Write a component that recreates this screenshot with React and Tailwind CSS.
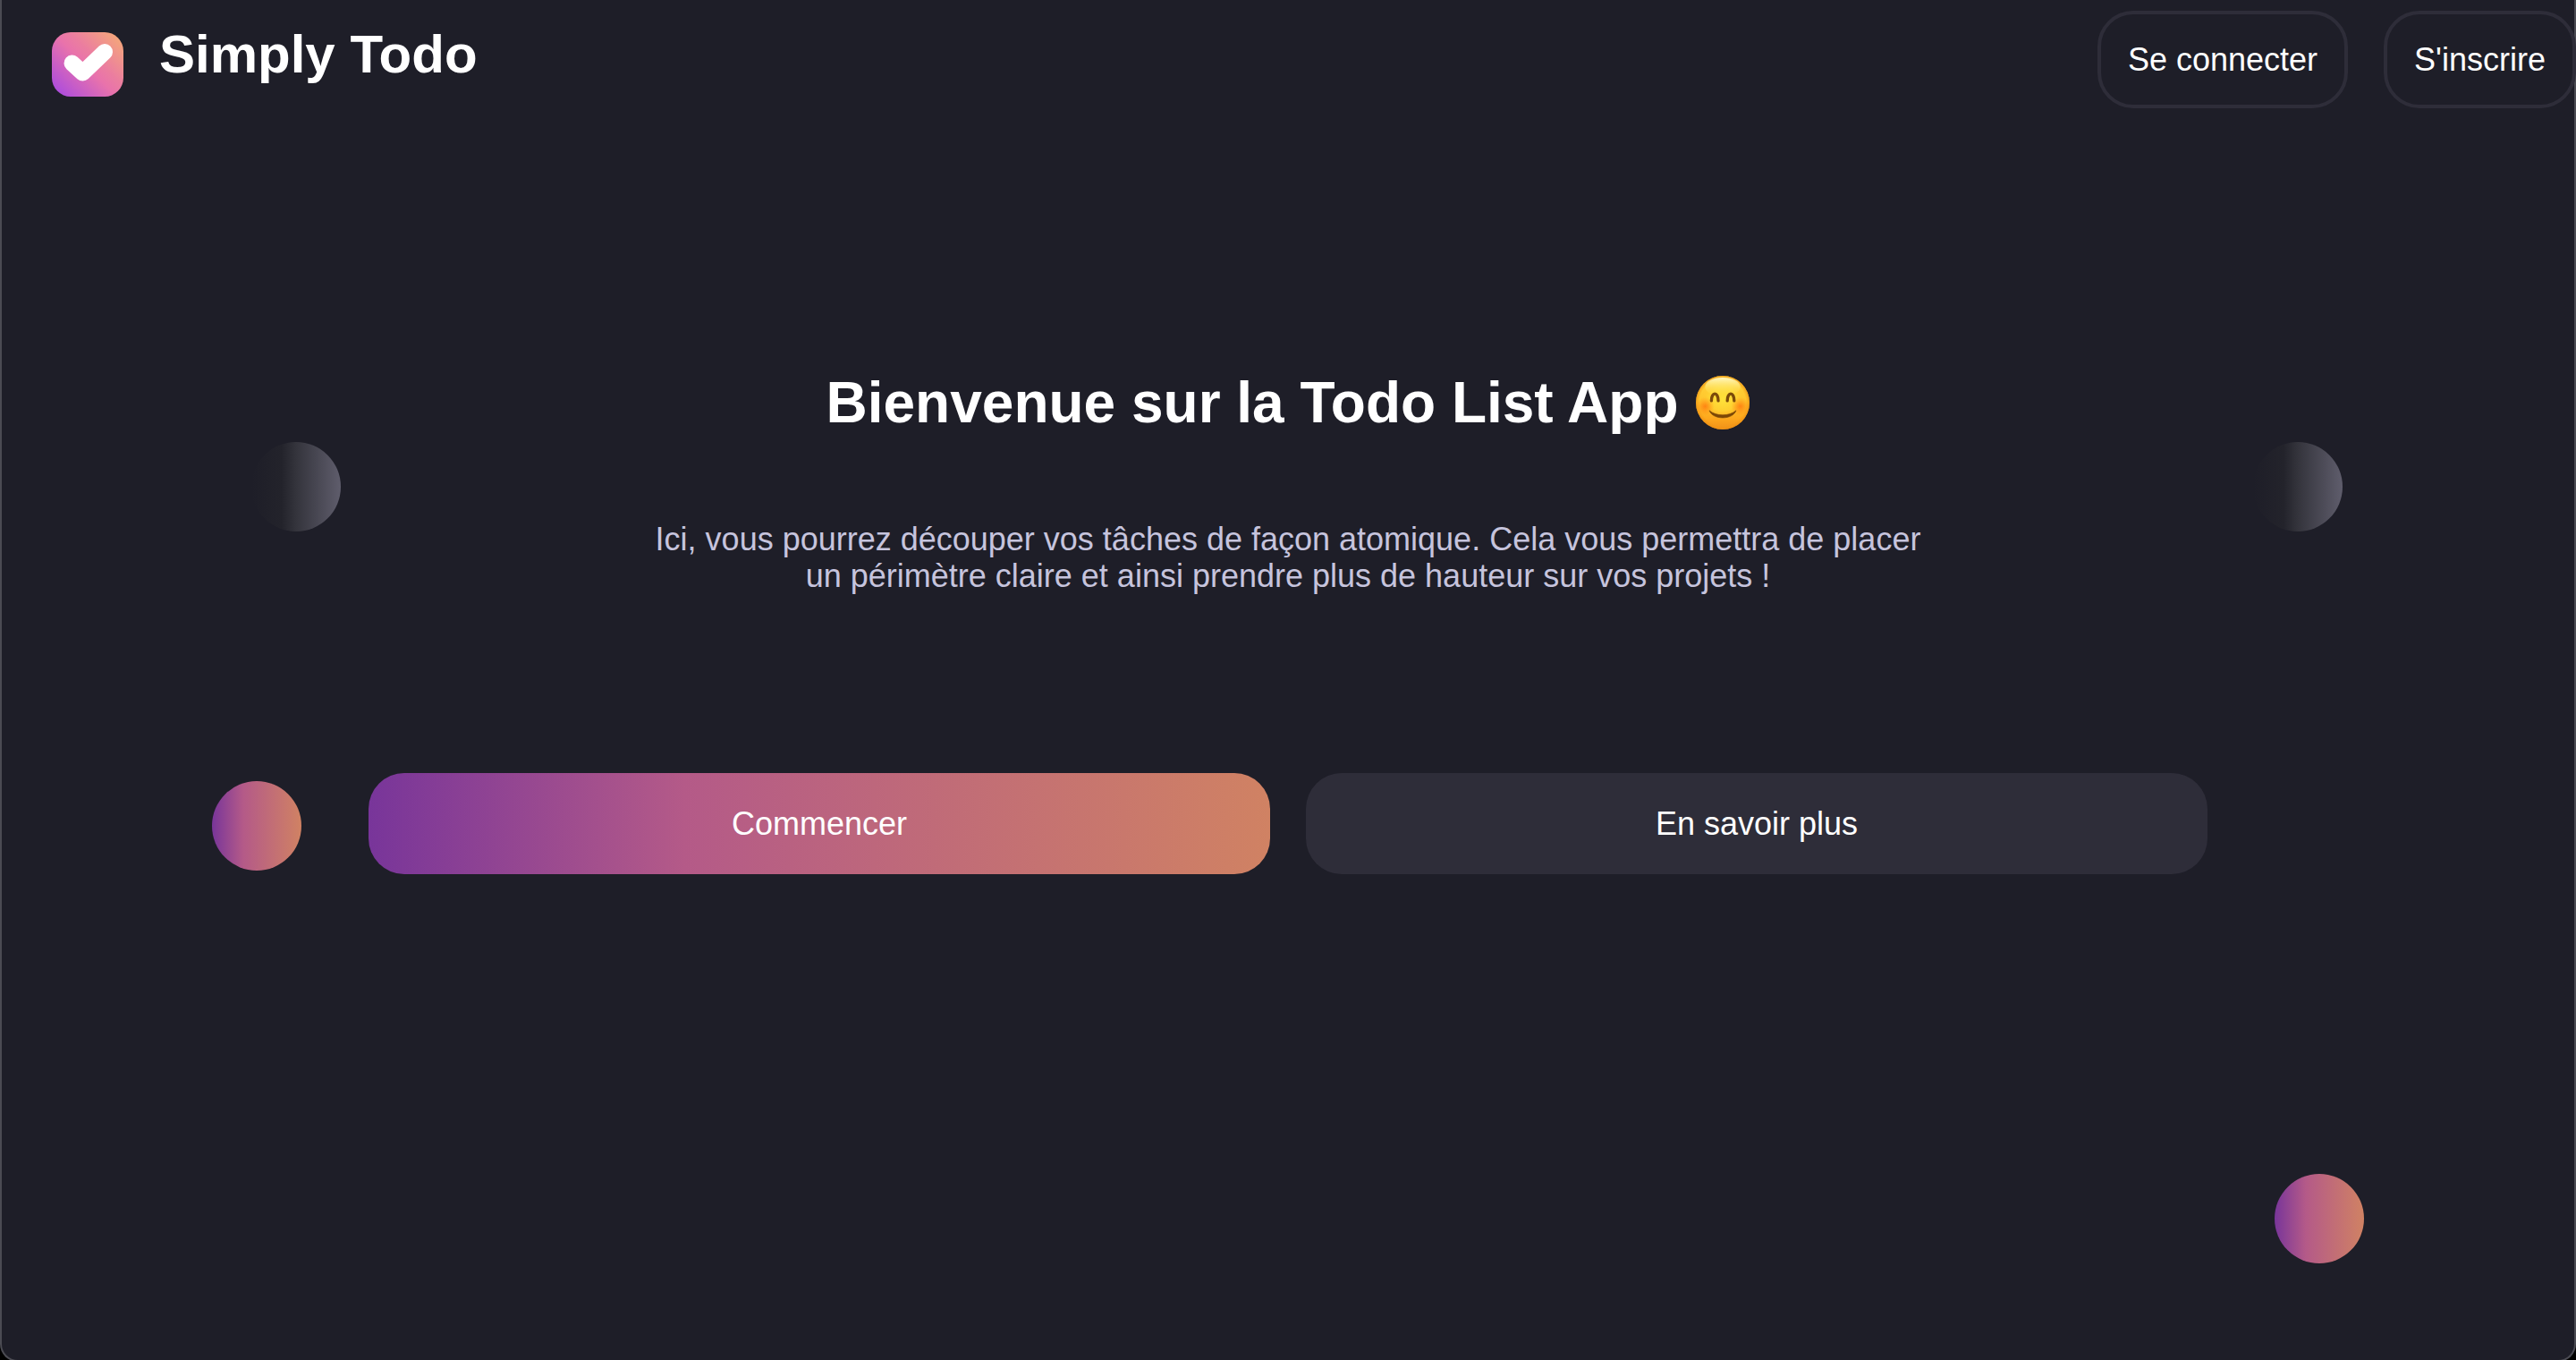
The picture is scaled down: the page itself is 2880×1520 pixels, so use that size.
const ACCENT =
  "bg-[linear-gradient(90deg,#78359a_0%,#b45a88_35%,#d08263_100%)]";
const MUTED =
  "bg-[linear-gradient(90deg,#1e1e28_0%,#23232b_34%,#34343c_50%,#5f5d6c_100%)]";

function Logo() {
  return (
    <svg className="h-[72px] w-20" viewBox="0 0 80 72" role="img" aria-label="Simply Todo">
      <defs>
        <linearGradient id="logo-fill" gradientUnits="userSpaceOnUse" x1="8" y1="68" x2="72" y2="4">
          <stop offset="0" stopColor="#ae4ddc" />
          <stop offset="0.48" stopColor="#e973ab" />
          <stop offset="0.62" stopColor="#eb7da0" />
          <stop offset="1" stopColor="#f4a57c" />
        </linearGradient>
      </defs>
      <rect width="80" height="72" rx="21" fill="url(#logo-fill)" />
      <path
        d="M22.5 34.5 L34.5 45.5 L59 22"
        fill="none"
        stroke="#fff"
        strokeWidth="18"
        strokeLinecap="round"
        strokeLinejoin="round"
      />
    </svg>
  );
}

function Smile() {
  return (
    <svg className="size-[60px]" viewBox="0 0 58 58" role="img" aria-label="Sourire">
      <defs>
        <linearGradient id="face" x1="0" y1="0" x2="0" y2="1">
          <stop offset="0" stopColor="#ffd83f" />
          <stop offset="0.5" stopColor="#ffc42b" />
          <stop offset="0.8" stopColor="#fda71d" />
          <stop offset="1" stopColor="#f0901a" />
        </linearGradient>
        <radialGradient id="glow" cx="0.5" cy="0.5" r="0.5">
          <stop offset="0" stopColor="#ffe23b" />
          <stop offset="0.6" stopColor="#ffd935" stopOpacity="0.7" />
          <stop offset="1" stopColor="#ffc22b" stopOpacity="0" />
        </radialGradient>
        <radialGradient id="cheek">
          <stop offset="0" stopColor="#ff7a0f" stopOpacity="0.85" />
          <stop offset="1" stopColor="#ff8a12" stopOpacity="0" />
        </radialGradient>
        <linearGradient id="shine" x1="0" y1="0" x2="0" y2="1">
          <stop offset="0" stopColor="#fffbd0" stopOpacity="0.9" />
          <stop offset="1" stopColor="#ffe94a" stopOpacity="0" />
        </linearGradient>
        <radialGradient id="rim">
          <stop offset="0.86" stopColor="#f29a12" stopOpacity="0" />
          <stop offset="1" stopColor="#ee8f12" stopOpacity="0.75" />
        </radialGradient>
      </defs>
      <circle cx="29" cy="29" r="29" fill="url(#face)" />
      <ellipse cx="29" cy="25" rx="24" ry="22" fill="url(#glow)" />
      <circle cx="29" cy="29" r="29" fill="url(#rim)" />
      <ellipse cx="29" cy="12" rx="19" ry="10" fill="url(#shine)" />
      <circle cx="10" cy="33" r="10" fill="url(#cheek)" />
      <circle cx="48" cy="33" r="10" fill="url(#cheek)" />
      <g fill="none" stroke="#7b4a0a" strokeLinecap="round">
        <path d="M16.8 27 C16.8 17 24.2 17 24.2 27" strokeWidth="3.2" />
        <path d="M34 27 C34 17 41.4 17 41.4 27" strokeWidth="3.2" />
      </g>
      <path
        d="M14.5 37.5 C22 44 36 44 43.5 37.5 C40 48 18 48 14.5 37.5 Z"
        fill="#7b4706"
        stroke="#7b4706"
        strokeWidth="0.6"
        strokeLinejoin="round"
      />
    </svg>
  );
}

function Dot({ className }) {
  return <span aria-hidden="true" className={`absolute size-[100px] rounded-full ${className}`} />;
}

function NavButton({ children }) {
  return (
    <button
      type="button"
      className="rounded-[40px] border-4 border-[#2e2d39] px-[30px] py-[30px] leading-[41px]"
    >
      {children}
    </button>
  );
}

function ActionButton({ className, children }) {
  return (
    <button type="button" className={`flex-1 rounded-[40px] py-9 leading-[41px] ${className}`}>
      {children}
    </button>
  );
}

export default function App() {
  return (
    <div className="h-screen overflow-hidden bg-black">
      <div className="relative h-[calc(100vh+2px)] rounded-b-[20px] border-2 border-t-0 border-[#4b4b53] bg-[#1e1e28] font-['Liberation_Sans',Arial,sans-serif] text-[36px] text-white">
        <header className="-mr-0.5 flex items-start justify-between pt-3">
          <div className="flex items-start gap-10 pt-6 pl-14">
            <Logo />
            <h1 className="-mt-2 text-[60px] leading-[66px] font-bold">Simply Todo</h1>
          </div>
          <nav className="flex gap-10">
            <NavButton>Se connecter</NavButton>
            <NavButton>S'inscrire</NavButton>
          </nav>
        </header>

        <main className="flex flex-col items-center pt-[292px]">
          <h2 className="flex items-center gap-5 text-[64px] leading-[74px] font-bold">
            Bienvenue sur la Todo List App
            <Smile />
          </h2>
          <p className="mt-[95px] w-1/2 text-center leading-[41px] text-[#c6c4dd]">
            Ici, vous pourrez découper vos tâches de façon atomique. Cela vous permettra de placer
            un périmètre claire et ainsi prendre plus de hauteur sur vos projets !
          </p>
          <div className="mt-[200px] flex w-full gap-10 px-[410px]">
            <ActionButton className={ACCENT}>Commencer</ActionButton>
            <ActionButton className="bg-[#2e2d39]">En savoir plus</ActionButton>
          </div>
        </main>

        <Dot className={`top-[494px] left-[279px] ${MUTED}`} />
        <Dot className={`top-[494px] right-[259px] ${MUTED}`} />
        <Dot className={`top-[873px] left-[235px] ${ACCENT}`} />
        <Dot className={`right-[235px] bottom-[108px] ${ACCENT}`} />
      </div>
    </div>
  );
}
